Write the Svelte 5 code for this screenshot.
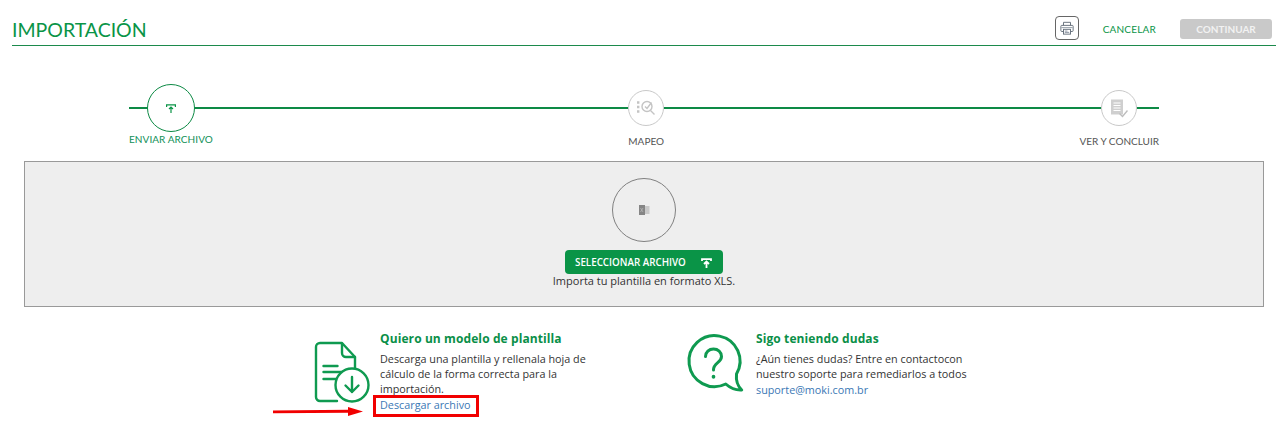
<script>
  const steps = [
    { label: 'ENVIAR ARCHIVO', active: true },
    { label: 'MAPEO', active: false },
    { label: 'VER Y CONCLUIR', active: false },
  ];
</script>

<div class="page">
  <header class="topbar">
    <h1>IMPORTACIÓN</h1>
    <div class="actions">
      <button class="print" type="button" aria-label="Imprimir">
        <svg width="14" height="14" viewBox="0 0 16 16" fill="none" stroke="#66707c" stroke-width="1.100">
          <path d="M4 5V1.500h8V5" />
          <rect x="1" y="5" width="14" height="7" rx="1" />
          <rect x="4" y="9.500" width="8" height="5.500" fill="#fff" />
          <path d="M5.500 11.500h3M5.500 13h5" stroke="#8a93a0" />
          <path d="M1.500 7.500h13" stroke="#9aa3ad" />
        </svg>
      </button>
      <button class="cancel" type="button">CANCELAR</button>
      <button class="continue" type="button" disabled>CONTINUAR</button>
    </div>
  </header>

  <div class="stepper">
    {#each steps as step, i}
      <div class="step" class:active={step.active}>
        <div class="dot-area">
          <div class="dot">
            {#if i === 0}
              <svg width="10" height="9" viewBox="0 0 10 9" fill="none" stroke="#0a9447" stroke-width="1.200">
                <path d="M0.600 3V0.800h8.800V3" />
                <path d="M5 9V3.500M3 5l2-2 2 2" />
              </svg>
            {:else if i === 1}
              <svg width="20" height="18" viewBox="0 0 20 18" fill="none" stroke="#c4c4c4" stroke-width="1.400">
                <circle cx="11" cy="7.500" r="5" />
                <path d="M9 7.500l2 2 4.500-6M14.500 11.500l4 4" />
                <path d="M1 3.500h2.400M1 8h2.400M1 12.500h2.400" stroke-width="2.400" />
              </svg>
            {:else}
              <svg width="18" height="19" viewBox="0 0 18 19" fill="none">
                <path d="M1 0.500h12v15H1z" fill="#cfcfcf" />
                <path d="M3.500 4h7M3.500 6.500h7M3.500 9h7M3.500 11.500h7" stroke="#fff" stroke-width="1.200" />
                <path d="M9.500 14.500l3 3 5-6" stroke="#bdbdbd" stroke-width="1.400" />
              </svg>
            {/if}
          </div>
        </div>
        <span class="step-label">{step.label}</span>
      </div>
    {/each}
  </div>

  <section class="dropzone">
    <div class="file-circle">
      <svg width="12" height="10" viewBox="0 0 12 10">
        <rect x="5" y="1" width="6.500" height="8" fill="#c9c9c9" />
        <rect x="1" y="0" width="6" height="10" fill="#858585" />
        <path d="M2.500 3l2.500 4M5 3L2.500 7" stroke="#b5b5b5" stroke-width="0.800" />
      </svg>
    </div>
    <button class="select" type="button">
      SELECCIONAR ARCHIVO
      <svg width="11" height="10" viewBox="0 0 11 10" fill="none" stroke="#fff" stroke-width="1.800">
        <path d="M1 3V1.200h9V3" />
        <path d="M5.500 10V4M3 6l2.500-2.500L8 6" />
      </svg>
    </button>
    <p>Importa tu plantilla en formato XLS.</p>
  </section>

  <div class="help">
    <div class="help-item first">
      <svg class="help-icon" width="56" height="62" viewBox="0 0 56 62" fill="none" stroke="#0f9a50" stroke-width="2.400" stroke-linecap="round" stroke-linejoin="round">
        <path d="M22 59H5a4 4 0 0 1-4-4V5a4 4 0 0 1 4-4h22l13 14v12" />
        <path d="M27 1.500V11a4 4 0 0 0 4 4h9" />
        <path d="M8.500 24h14M8.500 30h21M8.500 37h13" />
        <circle cx="37" cy="43" r="16.500" fill="#fff" />
        <path d="M37 35v15M30.500 43.500L37 50l6.500-6.500" />
      </svg>
      <div class="help-text">
        <h2>Quiero un modelo de plantilla</h2>
        <p>Descarga una plantilla y rellenala hoja de cálculo de la forma correcta para la importación.</p>
        <a href="#descargar">Descargar archivo<span class="mark-box"></span></a>
        <svg class="mark-arrow" width="92" height="10" viewBox="0 0 92 10">
          <path d="M0 4.500L75 3.800V1L90 5.500 75 10V6.800L0 7.200z" fill="#f10000" />
        </svg>
      </div>
    </div>
    <div class="help-item second">
      <svg class="help-icon bubble" width="60" height="60" viewBox="0 0 60 60" fill="none" stroke="#0f9a50" stroke-width="3" stroke-linecap="round" stroke-linejoin="round">
        <path d="M39.750 48A25.500 25.500 0 1 1 50.500 38Q49.500 48 55.700 54Q47 54.500 39.750 48z" />
        <path d="M19.500 20.500c0-4.500 3.500-7.500 8-7.500s8 3 8 7.500c0 6.500-8 6-8 13.500" />
        <path d="M27.500 40.500v0.500" stroke-width="3.600" />
      </svg>
      <div class="help-text">
        <h2>Sigo teniendo dudas</h2>
        <p>¿Aún tienes dudas? Entre en contactocon nuestro soporte para remediarlos a todos</p>
        <a href="#soporte">suporte@moki.com.br</a>
      </div>
    </div>
  </div>
</div>

<style>
  :global(body) {
    margin: 0;
    background: #fff;
  }

  .page {
    width: 1282px;
    height: 430px;
    overflow: hidden;
    font-family: "Open Sans", "Noto Sans", sans-serif;
    color: #333;
  }

  .topbar {
    display: flex;
    align-items: center;
    justify-content: space-between;
    height: 45px;
    margin: 0 6px 0 12px;
    border-bottom: 1px solid #1c8a4c;
  }

  h1 {
    margin: 14px 0 0;
    font-family: Lato, sans-serif;
    font-size: 19.500px;
    font-weight: 400;
    line-height: 24px;
    color: #0a9447;
  }

  .actions {
    display: flex;
    align-items: center;
    margin: 11px 4px 0 0;
  }

  .print {
    display: flex;
    align-items: center;
    justify-content: center;
    width: 24px;
    height: 24px;
    padding: 0;
    background: #fff;
    border: 1px solid #666;
    border-radius: 4px;
  }

  .cancel {
    margin: 2px 0 0 24px;
    padding: 0;
    background: none;
    border: 0;
    font: 400 10px/20px Lato, sans-serif;
    letter-spacing: 0.200px;
    color: #0a9447;
  }

  .continue {
    width: 92px;
    height: 20px;
    margin: 2px 0 0 24px;
    padding: 0;
    background: #c9c9c9;
    border: 0;
    border-radius: 3px;
    font: 700 10px/20px Lato, sans-serif;
    color: #f2f2f2;
  }

  .stepper {
    position: relative;
    display: flex;
    justify-content: space-between;
    margin: 38px 123px 0 129px;
    height: 77px;
  }

  .stepper::before {
    content: "";
    position: absolute;
    left: 0;
    right: 0;
    top: 23px;
    height: 2px;
    background: #0d8a45;
  }

  .step {
    position: relative;
    display: flex;
    flex-direction: column;
    align-items: center;
  }

  .dot-area {
    display: flex;
    align-items: center;
    justify-content: center;
    height: 48px;
  }

  .dot {
    display: flex;
    align-items: center;
    justify-content: center;
    box-sizing: border-box;
    width: 36px;
    height: 36px;
    background: #fff;
    border: 1px solid #c9c9c9;
    border-radius: 50%;
  }

  .active .dot {
    width: 48px;
    height: 48px;
    border-color: #0d8a45;
  }

  .step-label {
    margin-top: 2px;
    font: 400 10px/14px Lato, sans-serif;
    color: #555;
    white-space: nowrap;
  }

  .active .step-label {
    margin-top: 0;
    letter-spacing: 0.070px;
    color: #0f8f57;
  }

  .dropzone {
    display: flex;
    flex-direction: column;
    align-items: center;
    box-sizing: border-box;
    height: 146px;
    margin: 0 18px 0 24px;
    padding-top: 16px;
    background: #eee;
    border: 1px solid #999;
  }

  .file-circle {
    display: flex;
    align-items: center;
    justify-content: center;
    box-sizing: border-box;
    width: 64px;
    height: 64px;
    border: 1px solid #808080;
    border-radius: 50%;
  }

  .select {
    display: flex;
    align-items: center;
    justify-content: space-between;
    box-sizing: border-box;
    width: 158px;
    height: 24px;
    margin-top: 8px;
    padding: 1px 11px 0 10px;
    background: #0a9447;
    border: 0;
    border-radius: 4px;
    font: 600 9.800px/23px "Open Sans", sans-serif;
    color: #fff;
  }

  .dropzone p {
    margin: 0;
    font-size: 11px;
    line-height: 14px;
    color: #333;
  }

  .help {
    display: flex;
    margin: 24px 0 0 315px;
  }

  .help-item {
    display: flex;
  }

  .help-item.first {
    width: 371px;
  }

  .help-icon {
    flex-shrink: 0;
    margin-top: 11px;
    overflow: visible;
  }

  .help-icon.bubble {
    margin-top: 5px;
  }

  .help-item.first .help-text {
    margin-left: 9px;
    width: 216px;
  }

  .help-item.second .help-text {
    margin-left: 10px;
    width: 222px;
  }

  .help-text {
    position: relative;
  }

  h2 {
    margin: 0 0 5px;
    font-size: 12px;
    font-weight: 700;
    line-height: 15px;
    letter-spacing: 0.100px;
    color: #0a8f48;
  }

  .help-text p {
    margin: 0;
    font-size: 10.800px;
    line-height: 15px;
    color: #333;
  }

  .help-text a {
    position: relative;
    display: block;
    width: fit-content;
    margin-top: 1px;
    font-size: 10.800px;
    line-height: 15px;
    color: #3b78b5;
    text-decoration: none;
  }

  .mark-box {
    position: absolute;
    left: -7px;
    top: -2px;
    width: 106px;
    height: 22px;
    box-sizing: border-box;
    border: 3px solid #f10000;
  }

  .mark-arrow {
    position: absolute;
    left: -107px;
    top: 75px;
  }
</style>
